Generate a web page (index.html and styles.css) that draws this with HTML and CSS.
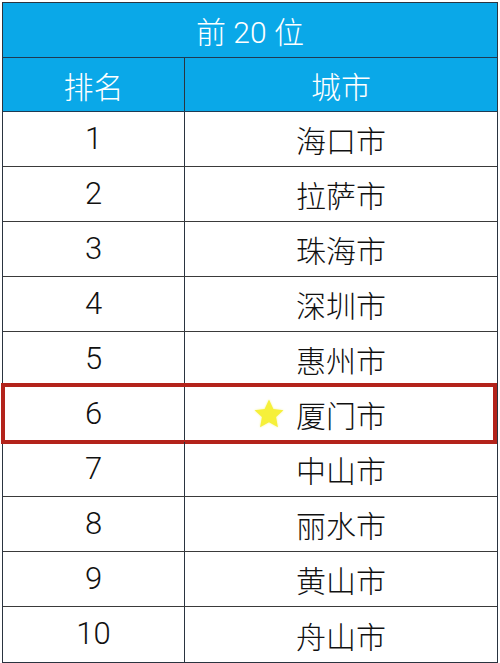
FILE: index.html
```html
<!DOCTYPE html>
<html lang="zh">
<head>
<meta charset="utf-8">
<link rel="stylesheet" href="styles.css">
</head>
<body>
<div class="table">
  <div class="title">前 20 位</div>
  <div class="row head"><div class="c1">排名</div><div class="c2">城市</div></div>
  <div class="row"><div class="c1 num">1</div><div class="c2">海口市</div></div>
  <div class="row"><div class="c1 num">2</div><div class="c2">拉萨市</div></div>
  <div class="row"><div class="c1 num">3</div><div class="c2">珠海市</div></div>
  <div class="row"><div class="c1 num">4</div><div class="c2">深圳市</div></div>
  <div class="row"><div class="c1 num">5</div><div class="c2">惠州市</div></div>
  <div class="row hl"><div class="c1 num">6</div><div class="c2"><span class="city">
    <svg class="star" viewBox="0 0 24 24" width="36" height="34"><path d="M12 1.8l3.1 6.6 7.1.9-5.2 4.9 1.3 7.1L12 17.8l-6.3 3.5 1.3-7.1L1.8 9.3l7.1-.9z" fill="#f6f03a"/></svg>厦门市</span></div></div>
  <div class="row"><div class="c1 num">7</div><div class="c2">中山市</div></div>
  <div class="row"><div class="c1 num">8</div><div class="c2">丽水市</div></div>
  <div class="row"><div class="c1 num">9</div><div class="c2">黄山市</div></div>
  <div class="row last"><div class="c1 num">10</div><div class="c2">舟山市</div></div>
</div>
</body>
</html>
```
FILE: styles.css
```css
html, body { margin: 0; padding: 0; background: #fff; }
body {
  font-family: "Liberation Sans", "Noto Sans CJK SC", sans-serif;
  color: #111;
}
.table {
  margin: 2px 0 0 2px;
  width: 494px;
  border: 1px solid #2a3440;
}
.title {
  height: 54px;
  background: #0aa8e8;
  color: #fff;
  font-family: "Roboto", "Noto Sans CJK SC", sans-serif;
  font-size: 30px;
  font-weight: 300;
  display: flex;
  align-items: center;
  justify-content: center;
  border-bottom: 1px solid #1f3a52;
}
.row {
  display: grid;
  grid-template-columns: 182px 1fr;
  height: 54px;
  border-bottom: 1px solid #3a3a3a;
  position: relative;
}
.row.last { border-bottom: none; height: 55px; }
.row.head {
  background: #0aa8e8;
  color: #fff;
  border-bottom: 1px solid #1f3a52;
  height: 53px;
}
.c1, .c2 {
  display: flex;
  align-items: center;
  justify-content: center;
  font-size: 30px;
  font-weight: 300;
}
.c1.num {
  font-family: "Roboto", "Liberation Sans", sans-serif;
  font-size: 31px;
  padding-bottom: 2px;
}
.c1 { border-right: 1px solid #2a3440; }
.city { position: relative; }
.star {
  position: absolute;
  left: -45px;
  top: 50%;
  transform: translateY(-50%);
  filter: drop-shadow(0 0 1px #f6f4a0);
}
.hl::after {
  content: "";
  position: absolute;
  left: -2px;
  right: 0px;
  top: -4px;
  bottom: -3px;
  border: 4px solid #b3231b;
  pointer-events: none;
}
```
